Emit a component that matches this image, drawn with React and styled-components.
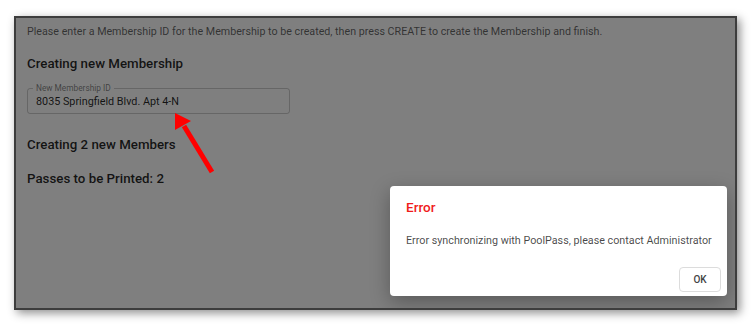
import React from "react";
import styled, { createGlobalStyle } from "styled-components";

const Global = createGlobalStyle`
  html, body { margin: 0; padding: 0; background: #ffffff; }
  body { font-family: Roboto, "Noto Sans", sans-serif; }
`;

const Page = styled.div`
  position: relative;
  padding: 16px 14px 0 14px;
  width: 751px;
  height: 328px;
  box-sizing: border-box;
`;

const Frame = styled.div`
  position: relative;
  width: 723px;
  height: 294px;
  box-sizing: border-box;
  border: 2px solid #3d3d3d;
  background: #ffffff;
  box-shadow: 3px 3px 9px rgba(0, 0, 0, 0.45);
  overflow: hidden;
`;

const Content = styled.div`
  padding: 6px 11px;
  display: flex;
  flex-direction: column;
`;

const Intro = styled.p`
  margin: 0;
  font-size: 10.7px;
  line-height: 16px;
  color: rgba(0, 0, 0, 0.62);
`;

const Heading = styled.h3`
  margin: ${(p) => p.$mt}px 0 0 0;
  font-size: 13.3px;
  line-height: 20px;
  font-weight: 500;
  color: rgba(0, 0, 0, 0.85);
`;

const Field = styled.div`
  position: relative;
  margin-top: 14px;
  width: 263px;
  height: 26px;
  box-sizing: border-box;
  border: 1px solid rgba(0, 0, 0, 0.2);
  border-radius: 3px;
  padding: 0 8px;
  display: flex;
  align-items: center;
`;

const Label = styled.span`
  position: absolute;
  left: 5px;
  top: -5px;
  font-size: 8.3px;
  line-height: 9px;
  color: rgba(0, 0, 0, 0.5);
  background: #ffffff;
  padding: 0 3px;
`;

const Value = styled.div`
  font-size: 10.8px;
  line-height: 14px;
  color: rgba(0, 0, 0, 0.85);
  padding-top: 1px;
`;

const Overlay = styled.div`
  position: absolute;
  inset: 0;
  background: rgba(0, 0, 0, 0.5);
  display: flex;
  justify-content: flex-end;
  align-items: flex-end;
  padding: 0 8px 12px 0;
`;

const Dialog = styled.div`
  width: 337px;
  height: 110px;
  box-sizing: border-box;
  background: #ffffff;
  border-radius: 4px;
  box-shadow: 0 6px 20px rgba(0, 0, 0, 0.3);
  padding: 12px 6px 4px 16px;
  display: flex;
  flex-direction: column;
`;

const DialogTitle = styled.div`
  font-size: 13.5px;
  line-height: 18px;
  font-weight: 500;
  color: #f01b1b;
`;

const DialogText = styled.div`
  margin-top: 17px;
  font-size: 10.75px;
  line-height: 16px;
  color: rgba(0, 0, 0, 0.72);
`;

const Actions = styled.div`
  margin-top: auto;
  display: flex;
  justify-content: flex-end;
`;

const OkButton = styled.button`
  width: 42px;
  height: 25px;
  background: #ffffff;
  border: 1px solid #dcdcdc;
  border-radius: 4px;
  font-family: Roboto, sans-serif;
  font-size: 10px;
  font-weight: 500;
  color: #444;
  padding: 0;
`;

const Arrow = styled.svg`
  position: absolute;
  left: 0;
  top: 0;
  pointer-events: none;
`;

export default function App() {
  return (
    <>
      <Global />
      <Page>
        <Frame>
          <Content>
            <Intro>
              Please enter a Membership ID for the Membership to be created, then press CREATE to create the Membership and finish.
            </Intro>
            <Heading $mt={14}>Creating new Membership</Heading>
            <Field>
              <Label>New Membership ID</Label>
              <Value>8035 Springfield Blvd. Apt 4-N</Value>
            </Field>
            <Heading $mt={21}>Creating 2 new Members</Heading>
            <Heading $mt={14}>Passes to be Printed: 2</Heading>
          </Content>
          <Overlay>
            <Dialog>
              <DialogTitle>Error</DialogTitle>
              <DialogText>Error synchronizing with PoolPass, please contact Administrator</DialogText>
              <Actions>
                <OkButton>OK</OkButton>
              </Actions>
            </Dialog>
          </Overlay>
        </Frame>
        <Arrow width="751" height="328" viewBox="0 0 751 328">
          <line x1="212" y1="172" x2="184" y2="126" stroke="#ff0000" strokeWidth="5" />
          <polygon points="175,113 191,121 175,130" fill="#ff0000" />
        </Arrow>
      </Page>
    </>
  );
}
